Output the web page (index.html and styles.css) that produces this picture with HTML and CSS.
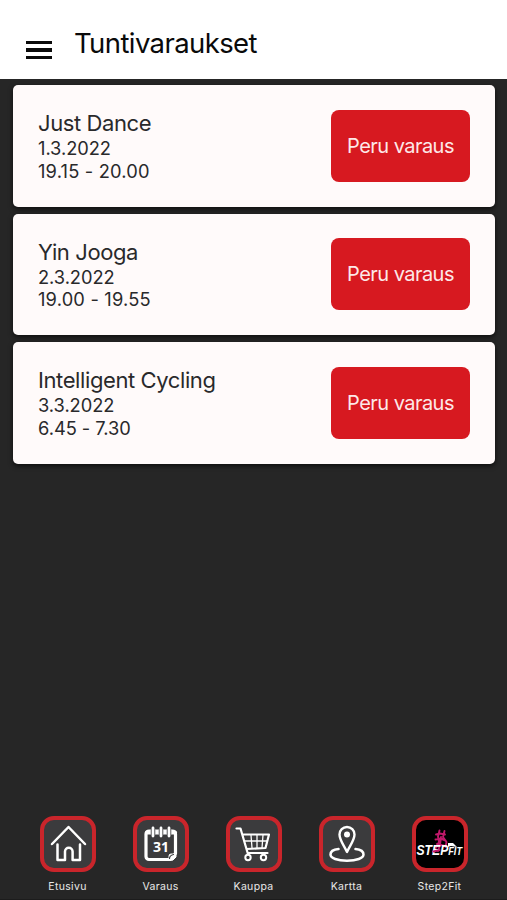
FILE: index.html
```html
<!DOCTYPE html>
<html lang="fi">
<head>
<meta charset="utf-8">
<title>Tuntivaraukset</title>
<link rel="stylesheet" href="styles.css">
</head>
<body>
<div class="app">
  <header class="header">
    <div class="menu"><span></span><span></span><span></span></div>
    <h1 class="title">Tuntivaraukset</h1>
  </header>
  <main class="list">
    <article class="card">
      <div><h2 class="name">Just Dance</h2><p class="line">1.3.2022</p><p class="line time">19.15 - 20.00</p></div>
      <button class="cancel">Peru varaus</button>
    </article>
    <article class="card">
      <div><h2 class="name">Yin Jooga</h2><p class="line">2.3.2022</p><p class="line time">19.00 - 19.55</p></div>
      <button class="cancel">Peru varaus</button>
    </article>
    <article class="card">
      <div><h2 class="name">Intelligent Cycling</h2><p class="line">3.3.2022</p><p class="line">6.45 - 7.30</p></div>
      <button class="cancel">Peru varaus</button>
    </article>
  </main>
  <nav class="tabs">
    <a class="tab">
      <span class="tile"><svg viewBox="0 0 56 56"><path d="M12 28 28.500 11 45 28M17.500 28.500V44h7.500v-8.500a3.800 3.800 0 0 1 7.600 0V44H40V28.500" stroke-width="2.500"/></svg></span>
      <span class="label">Etusivu</span>
    </a>
    <a class="tab">
      <span class="tile"><svg viewBox="0 0 56 56"><path d="M16 15h23.500a3 3 0 0 1 3 3v19.500l-5.500 6H16a3 3 0 0 1-3-3V18a3 3 0 0 1 3-3z" stroke-width="3.200"/><path d="M14 16.500h28" stroke-width="4"/><path d="M36 44v-4q0-2 2-2h5v3l-3 3z" fill="#fff" stroke-width="1"/><path d="M36.500 42.500q0-3 4-4" stroke="#3b3b3d" stroke-width="1.200"/><path d="M20 14v4M28 14v4M36 14v4" stroke="#3b3b3d" stroke-width="4.500"/><path d="M20 12v8M28 12v8M36 12v8" stroke-width="2.800"/><text class="day" x="28" y="35.500">31</text></svg></span>
      <span class="label">Varaus</span>
    </a>
    <a class="tab">
      <span class="tile"><svg viewBox="0 0 56 56"><path d="M10.500 12.500H14.500L21.500 36.500M16.500 18.500h26.500L39.500 32 20.500 33M21.500 37h20" stroke-width="2.200"/><path d="M18.500 25h23M25 19l1 13M31 19v13M37 19l-1 13" stroke-width="1.300"/><circle cx="22" cy="41.500" r="2.700" stroke-width="2"/><circle cx="37.500" cy="41.500" r="2.700" stroke-width="2"/></svg></span>
      <span class="label">Kauppa</span>
    </a>
    <a class="tab">
      <span class="tile"><svg viewBox="0 0 56 56"><path d="M28 36C25 29.500 20.500 24 20.500 18.500a7.500 7.500 0 0 1 15 0C35.500 24 31 29.500 28 36z" stroke-width="2.400"/><circle cx="28" cy="18.500" r="3" fill="#fff" stroke="none"/><path d="M19.500 33C14 33.500 11.500 36 11.500 38.500c0 3.800 7 6.200 16.500 6.200s16.500-2.400 16.500-6.200c0-2.500-2.500-5-8-5.500" stroke-width="2.500"/></svg></span>
      <span class="label">Kartta</span>
    </a>
    <a class="tab">
      <span class="tile logo"><svg viewBox="0 0 56 56"><g stroke="#c0186a" stroke-width="1.900"><path d="M27.500 14.500l-1.500 6 1 5-2 5-4 5M32.500 15l-1.500 6 3.500 5-1 5M24 18.500l4-1 5 1M23.500 23.500l5-1 5 2M25 28l8 2M28 29l-2 6M29 21l-1 8"/></g><text class="brand" x="4.500" y="39" textLength="45.500" lengthAdjust="spacingAndGlyphs">STEP<tspan class="small">FIT</tspan></text><path d="M36 27l5 0 4 4-6-1-3 1z" fill="#fff" stroke="none"/><path d="M21.500 35.500l6-1.500" stroke="#c0186a" stroke-width="2"/></svg></span>
      <span class="label">Step2Fit</span>
    </a>
  </nav>
</div>
</body>
</html>
```
FILE: styles.css
```css
* { box-sizing: border-box; }
body { margin: 0; background: #262626; font-family: Inter, "Liberation Sans", sans-serif; }
h1, h2, p { margin: 0; font-weight: 400; }
.app { height: 900px; display: flex; flex-direction: column; border-bottom: 1px solid #1c1c1c; }
.header { height: 79px; flex: none; background: #fff; display: flex; align-items: flex-start; }
.menu { margin: 40.500px 0 0 26px; width: 26px; display: flex; flex-direction: column; gap: 4px; }
.menu span { height: 3.600px; background: #0a0a0a; }
.title { margin: 26px 0 0 22px; font-size: 27.500px; line-height: 34px; letter-spacing: -0.600px; color: #0a0a0a; }
.list { flex: 1; padding: 6px 12px 0 13px; display: flex; flex-direction: column; gap: 7px; }
.card { height: 121.600px; flex: none; display: flex; align-items: center; justify-content: space-between; padding: 0 25px; background: #fffafa; border-radius: 5px; box-shadow: 0 2px 5px rgba(0,0,0,.65); color: #29292b; }
.name { font-size: 22px; line-height: 28px; letter-spacing: -0.400px; }
.line { font-size: 18.300px; line-height: 22.500px; letter-spacing: -0.050px; }
.time { letter-spacing: .180px; }
.cancel { width: 139px; height: 72px; padding: 0; border: 0; border-radius: 8px; background: #d71920; color: #fde8e8; font: 400 20px Inter, "Liberation Sans", sans-serif; letter-spacing: -0.550px; }
.tabs { flex: none; padding: 0 39px 5px 40px; display: flex; justify-content: space-between; }
.tab { width: 56px; display: flex; flex-direction: column; align-items: center; }
.tile { width: 56px; height: 56px; border: 4px solid #c9252b; border-radius: 14px; background: #3b3b3d; overflow: hidden; }
.tile svg { display: block; width: 56px; height: 56px; margin: -4px; fill: none; stroke: #fff; stroke-linecap: round; stroke-linejoin: round; }
.logo { background: #000; }
.label { margin: 8px 1px 0 0; font: 10.500px/14px Inter, sans-serif; letter-spacing: .320px; color: #e8e8e8; white-space: nowrap; }
.day { font: 700 14px "Open Sans", sans-serif; fill: #fff; stroke: none; text-anchor: middle; }
.brand { font: italic 700 14px "Liberation Sans", sans-serif; fill: #fff; stroke: none; }
.small { font-size: 10.500px; }
```
